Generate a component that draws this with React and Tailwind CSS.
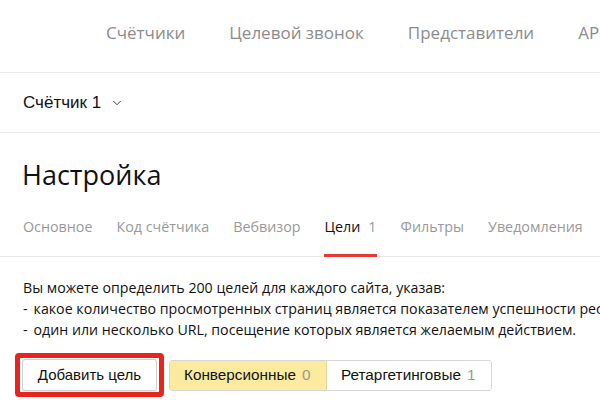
import { ChevronDown } from 'lucide-react';

const topLinks = ['Счётчики', 'Целевой звонок', 'Представители', 'API'];

const tabs = [
  { label: 'Основное' },
  { label: 'Код счётчика' },
  { label: 'Вебвизор' },
  { label: 'Цели', count: 1, active: true },
  { label: 'Фильтры' },
  { label: 'Уведомления' },
  { label: 'Доступ' },
];

const ya = { fontFamily: '"Open Sans", "Noto Sans", sans-serif' };
const arial = { fontFamily: '"Liberation Sans", Arial, sans-serif' };

export default function App() {
  return (
    <div className="w-[600px] h-[400px] overflow-hidden bg-white text-black" style={ya}>
      {/* top menu */}
      <nav className="h-[73px] flex items-center gap-[44px] pl-[106px] pb-[6px] border-b border-[#ebebeb] whitespace-nowrap">
        {topLinks.map((l) => (
          <a key={l} className="text-[17px] text-[#8c8c8c]">{l}</a>
        ))}
      </nav>

      {/* counter selector */}
      <div className="h-[60px] flex items-center px-[23px] border-b border-[#ebebeb]">
        <button className="flex items-center gap-[9px] text-[17px] text-[#111]" style={arial}>
          Счётчик 1
          <ChevronDown className="w-[14px] h-[14px] text-[#333]" strokeWidth={1.6} />
        </button>
      </div>

      <h1 className="pt-[24px] px-[22px] text-[27px] leading-[36px] text-[#111]">Настройка</h1>

      {/* tabs */}
      <div className="mt-[18px] flex gap-[24px] px-[23px] border-b border-[#e8e8e8] whitespace-nowrap">
        {tabs.map((t) => (
          <div
            key={t.label}
            className={
              t.active
                ? '-mb-px pb-[11px] border-b-[3px] border-[#e53935] text-[14.3px] leading-[32px] text-[#111]'
                : '-mb-px pb-[11px] border-b-[3px] border-transparent text-[14.3px] leading-[32px] text-[#999]'
            }
          >
            {t.label}
            {t.count != null && <span className="ml-[8px] text-[#999]">{t.count}</span>}
          </div>
        ))}
      </div>

      {/* description */}
      <div className="pt-[20px] px-[23px] text-[14.2px] leading-[21px] text-[#111] whitespace-nowrap">
        <p>Вы можете определить 200 целей для каждого сайта, указав:</p>
        <p><span className="mr-[6px]">-</span>какое количество просмотренных страниц является показателем успешности ресурса;</p>
        <p><span className="mr-[6px]">-</span>один или несколько URL, посещение которых является желаемым действием.</p>
      </div>

      {/* actions */}
      <div className="mt-[13px] flex items-center gap-[5px] pl-[15px]" style={arial}>
        <div className="border-[5px] border-[#e8241c] rounded-[4px] px-[2px] py-[1px]">
          <button className="w-[135px] h-[32px] rounded-[3px] border border-[#cfcfcf] bg-white shadow-[0_1px_1px_rgba(0,0,0,0.08)] text-[15px] text-[#111]">
            Добавить цель
          </button>
        </div>
        <div className="flex h-[31px] rounded-[3px] border border-[#d6d6d6] overflow-hidden text-[15.3px]">
          <div className="w-[157px] flex items-center px-[14px] bg-[#fcea9f] border-r border-[#e0d59c] text-[#111]">
            Конверсионные<span className="ml-[6px] text-[#999]">0</span>
          </div>
          <div className="w-[164px] flex items-center px-[14px] bg-white text-[#111]">
            Ретаргетинговые<span className="ml-[6px] text-[#999]">1</span>
          </div>
        </div>
      </div>
    </div>
  );
}
